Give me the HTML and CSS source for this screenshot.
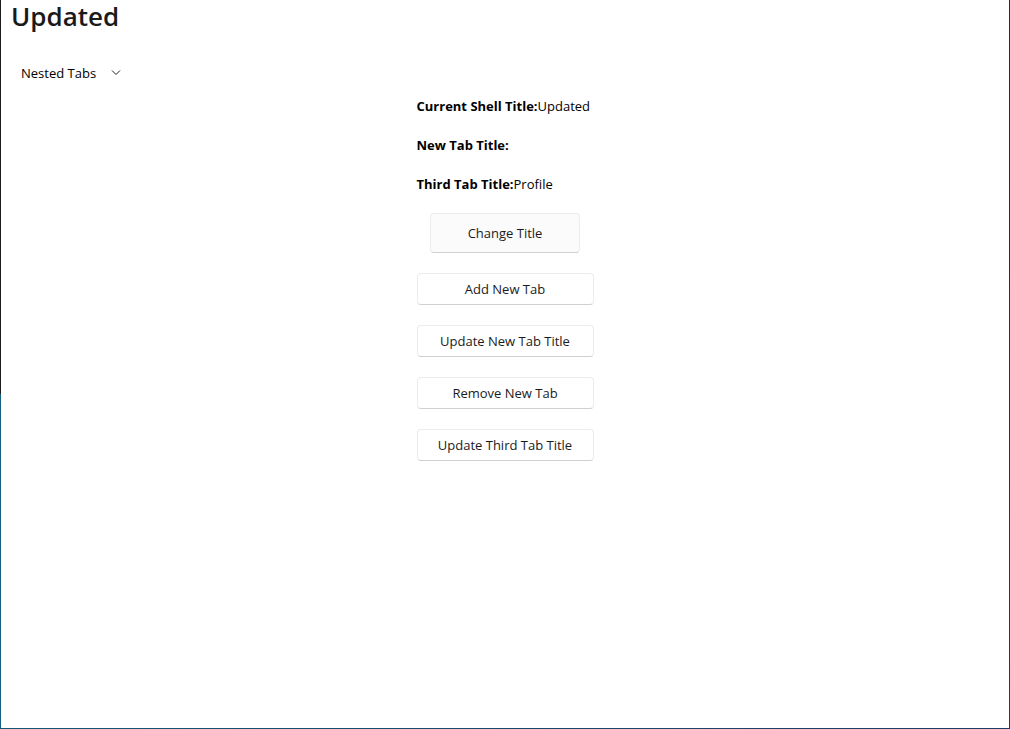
FILE: index.html
```html
<!DOCTYPE html>
<html lang="en">
<head>
<meta charset="utf-8">
<meta name="viewport" content="width=device-width, initial-scale=1">
<title>Updated</title>
<link rel="stylesheet" href="styles.css">
</head>
<body>
<div class="window">
  <div class="page">
    <header>
      <h1 class="title">Updated</h1>
      <nav class="nav">
        <button class="nav-item" type="button" aria-haspopup="true">
          Nested Tabs
          <svg class="chevron" viewBox="0 0 10 6" aria-hidden="true"><path d="M1 .5l4 4 4-4"/></svg>
        </button>
      </nav>
    </header>
    <main class="content">
      <div class="stack">
        <p class="field"><strong>Current Shell Title:</strong><span>Updated</span></p>
        <p class="field"><strong>New Tab Title:</strong></p>
        <p class="field"><strong>Third Tab Title:</strong><span>Profile</span></p>
      </div>
      <div class="stack">
        <button class="button button-large" type="button">Change Title</button>
        <button class="button" type="button">Add New Tab</button>
        <button class="button" type="button">Update New Tab Title</button>
        <button class="button" type="button">Remove New Tab</button>
        <button class="button" type="button">Update Third Tab Title</button>
      </div>
    </main>
  </div>
</div>
</body>
</html>
```

FILE: styles.css
```css
* {
  box-sizing: border-box;
}

body {
  margin: 0;
  background: #fff;
  color: #000;
  font: 13px/19px "Segoe UI", "Open Sans", "Noto Sans", sans-serif;
}

/* The desktop shows through as a one-pixel frame around the page. */
.window {
  display: flex;
  min-height: 100vh;
  padding: 0 1px 1px;
  background:
    linear-gradient(#1c1c1c 54%, #17607f 54%, #17607f) left / 1px 100% no-repeat,
    linear-gradient(#0c2d5e, #1b3c66) right / 1px 100% no-repeat,
    linear-gradient(to right, #145672, #1b3c66);
}

.page {
  flex: 1;
  background: #fff;
}

.title {
  margin: 0;
  padding: 0 10px;
  color: #1a1a1a;
  font-size: 26px;
  font-weight: 600;
  line-height: 32px;
}

.nav {
  display: flex;
  padding: 21px 10px 0;
}

.nav-item {
  display: flex;
  align-items: center;
  gap: 15px;
  height: 40px;
  padding: 0 10px;
  border: 0;
  background: none;
  color: #000;
  font: inherit;
}

.chevron {
  width: 10px;
  height: 6px;
  fill: none;
  stroke: #222;
}

.content {
  display: flex;
  flex-direction: column;
  gap: 19px;
  width: 177px;
  margin: 4px auto 0;
}

.stack {
  display: flex;
  flex-direction: column;
  gap: 20px;
}

.field {
  margin: 0;
  white-space: nowrap;
}

.field strong {
  font-weight: 700;
}

.button {
  height: 32px;
  padding: 0;
  border: 1px solid #ececec;
  border-bottom-color: #d0d0d0;
  border-radius: 4px;
  background: #fff;
  color: #1b1b1b;
  font: inherit;
}

.button-large {
  align-self: center;
  width: 150px;
  height: 40px;
  background: #fbfbfb;
}
```
